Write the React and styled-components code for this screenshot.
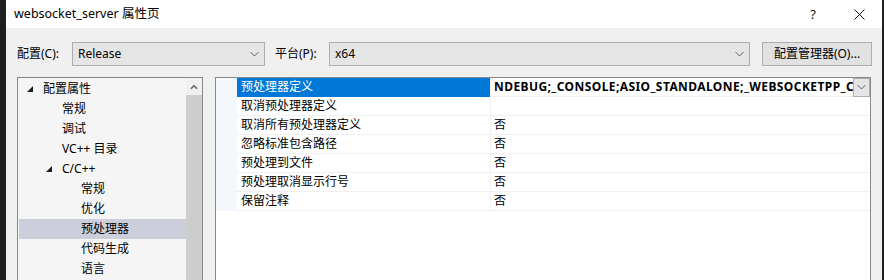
import React from 'react'
import styled, { createGlobalStyle } from 'styled-components'

const GlobalStyle = createGlobalStyle`
  html, body {
    margin: 0;
    padding: 0;
    background: #1f1f1f;
  }
  body {
    font-family: "Noto Sans", "Noto Sans CJK SC", sans-serif;
    font-size: 12px;
    color: #000;
  }
`

const Window = styled.div`
  margin-left: 6px;
  width: 876px;
  height: 280px;
  overflow: hidden;
  background: #f0f0f0;
  display: flex;
  flex-direction: column;
`

const TitleBar = styled.div`
  height: 28px;
  flex: none;
  background: #fff;
  display: flex;
  align-items: center;
  padding-left: 8px;
`

const Title = styled.div`
  flex: 1;
  font-size: 12.5px;
  line-height: 16px;
`

const TitleButton = styled.div`
  width: 46px;
  height: 28px;
  display: flex;
  align-items: center;
  justify-content: center;
  font-size: 13px;
  color: #111;
`

const Body = styled.div`
  flex: 1;
  padding: 14px 11px 0 11px;
  display: flex;
  flex-direction: column;
  gap: 11px;
  min-height: 0;
`

const Toolbar = styled.div`
  display: flex;
  align-items: center;
  height: 24px;
  flex: none;
`

const Label = styled.span`
  width: ${p => p.$width}px;
  flex: none;
  line-height: 16px;
  white-space: nowrap;
`

const Combo = styled.div`
  box-sizing: border-box;
  width: ${p => p.$width}px;
  flex: none;
  height: 24px;
  background: #e5e5e5;
  border: 1px solid #adadad;
  display: flex;
  align-items: center;
  padding: 0 5px 0 5px;
  margin-right: ${p => p.$after}px;
`

const ComboText = styled.span`
  flex: 1;
  line-height: 16px;
`

const Button = styled.div`
  box-sizing: border-box;
  width: 110px;
  flex: none;
  height: 24px;
  background: #e1e1e1;
  border: 1px solid #adadad;
  display: flex;
  align-items: center;
  justify-content: center;
  line-height: 16px;
  white-space: nowrap;
`

const Panels = styled.div`
  flex: 1;
  display: flex;
  gap: 12px;
  min-height: 0;
`

const Tree = styled.div`
  box-sizing: border-box;
  width: 186px;
  flex: none;
  height: 220px;
  border: 1px solid #828790;
  background: #f5f5f5;
  display: flex;
`

const TreeList = styled.div`
  flex: 1;
  min-width: 0;
  padding: 1px 0 0 1px;
`

const TreeItem = styled.div`
  height: 20px;
  display: flex;
  align-items: center;
  padding-left: ${p => 8 + p.$level * 19}px;
  background: ${p => (p.$selected ? '#cccedb' : 'transparent')};
`

const Expander = styled.span`
  width: 16px;
  flex: none;
  display: flex;
  align-items: center;
`

const ItemText = styled.span`
  line-height: 16px;
  white-space: nowrap;
`

const ScrollBar = styled.div`
  width: 16px;
  flex: none;
  display: flex;
  flex-direction: column;
  background: #f0f0f0;
`

const ScrollArrow = styled.div`
  height: 17px;
  display: flex;
  align-items: center;
  justify-content: center;
`

const ScrollThumb = styled.div`
  flex: 1;
  background: #cdcdcd;
`

const Grid = styled.div`
  box-sizing: border-box;
  flex: 1;
  min-width: 0;
  height: 220px;
  border: 1px solid #828790;
  background: #fff;
`

const GridRow = styled.div`
  display: flex;
  height: 19px;
`

const Gutter = styled.div`
  width: 21px;
  flex: none;
  background: #f4f7fc;
`

const NameCell = styled.div`
  box-sizing: border-box;
  width: 253px;
  flex: none;
  padding-left: 4px;
  display: flex;
  align-items: center;
  background: ${p => (p.$selected ? '#0078d7' : 'transparent')};
  color: ${p => (p.$selected ? '#fff' : '#000')};
  border-bottom: 1px solid ${p => (p.$selected ? '#0078d7' : '#f0f0f0')};
  line-height: 16px;
  white-space: nowrap;
`

const ValueCell = styled.div`
  box-sizing: border-box;
  flex: 1;
  min-width: 0;
  display: flex;
  align-items: center;
  border-left: 1px solid #f0f0f0;
  border-bottom: 1px solid #f0f0f0;
  padding-left: 3px;
`

const ValueText = styled.span`
  flex: 1;
  min-width: 0;
  overflow: hidden;
  white-space: nowrap;
  line-height: 16px;
  font-weight: ${p => (p.$bold ? 700 : 400)};
  letter-spacing: ${p => (p.$bold ? '0.42px' : '0')};
`

const DropButton = styled.div`
  box-sizing: border-box;
  width: 17px;
  height: 19px;
  flex: none;
  background: #e5e5e5;
  border: 1px solid #adadad;
  display: flex;
  align-items: center;
  justify-content: center;
`

const Chevron = ({ up, color = '#606060', w = 9 }) => (
  <svg width={w} height="6" viewBox="0 0 9 6">
    {up ? (
      <polyline points="1,5 4.5,1.5 8,5" fill="none" stroke={color} strokeWidth="1.6" />
    ) : (
      <polyline points="0.5,1 4.5,5 8.5,1" fill="none" stroke={color} strokeWidth="1" />
    )}
  </svg>
)

const Triangle = () => (
  <svg width="6" height="6" viewBox="0 0 6 6">
    <polygon points="6,0 6,6 0,6" fill="#1e1e1e" />
  </svg>
)

const treeItems = [
  { label: '配置属性', level: 0, expanded: true },
  { label: '常规', level: 1 },
  { label: '调试', level: 1 },
  { label: 'VC++ 目录', level: 1 },
  { label: 'C/C++', level: 1, expanded: true },
  { label: '常规', level: 2 },
  { label: '优化', level: 2 },
  { label: '预处理器', level: 2, selected: true },
  { label: '代码生成', level: 2 },
  { label: '语言', level: 2 },
]

const props = [
  { name: '预处理器定义', value: 'NDEBUG;_CONSOLE;ASIO_STANDALONE;_WEBSOCKETPP_CPP11_STL_', selected: true },
  { name: '取消预处理器定义', value: '' },
  { name: '取消所有预处理器定义', value: '否' },
  { name: '忽略标准包含路径', value: '否' },
  { name: '预处理到文件', value: '否' },
  { name: '预处理取消显示行号', value: '否' },
  { name: '保留注释', value: '否' },
]

export default function App() {
  return (
    <>
      <GlobalStyle />
      <Window>
        <TitleBar>
          <Title>websocket_server 属性页</Title>
          <TitleButton>?</TitleButton>
          <TitleButton>
            <svg width="11" height="11" viewBox="0 0 11 11">
              <path d="M0.5 0.5 L10.5 10.5 M10.5 0.5 L0.5 10.5" stroke="#111" strokeWidth="1" />
            </svg>
          </TitleButton>
        </TitleBar>
        <Body>
          <Toolbar>
            <Label $width={55}>配置(C):</Label>
            <Combo $width={193} $after={10}>
              <ComboText>Release</ComboText>
              <Chevron />
            </Combo>
            <Label $width={54}>平台(P):</Label>
            <Combo $width={421} $after={12}>
              <ComboText>x64</ComboText>
              <Chevron />
            </Combo>
            <Button>配置管理器(O)...</Button>
          </Toolbar>
          <Panels>
            <Tree>
              <TreeList>
                {treeItems.map((it, i) => (
                  <TreeItem key={i} $level={it.level} $selected={it.selected}>
                    <Expander>{it.expanded && <Triangle />}</Expander>
                    <ItemText>{it.label}</ItemText>
                  </TreeItem>
                ))}
              </TreeList>
              <ScrollBar>
                <ScrollArrow>
                  <Chevron up w={8} />
                </ScrollArrow>
                <ScrollThumb />
              </ScrollBar>
            </Tree>
            <Grid>
              {props.map((p, i) => (
                <GridRow key={i}>
                  <Gutter />
                  <NameCell $selected={p.selected}>{p.name}</NameCell>
                  <ValueCell>
                    <ValueText $bold={p.selected}>{p.value}</ValueText>
                    {p.selected && (
                      <DropButton>
                        <Chevron />
                      </DropButton>
                    )}
                  </ValueCell>
                </GridRow>
              ))}
            </Grid>
          </Panels>
        </Body>
      </Window>
    </>
  )
}
